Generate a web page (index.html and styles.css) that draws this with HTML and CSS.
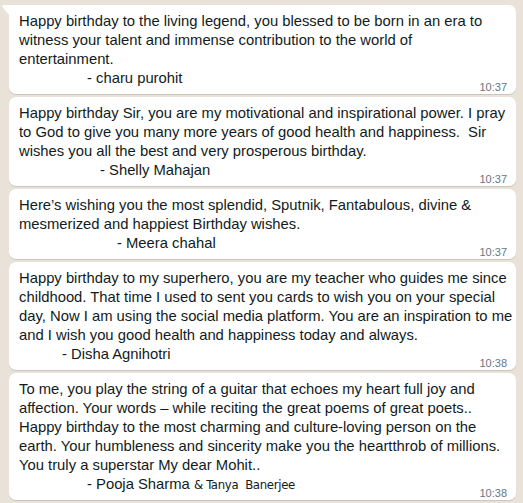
FILE: index.html
```html
<!DOCTYPE html>
<html>
<head>
<meta charset="utf-8">
<link rel="stylesheet" href="styles.css">
</head>
<body>
<div class="chat">
  <div class="bubble first">
    <svg class="tail" width="8" height="13" viewBox="0 0 8 13"><path d="M8 0 H1.5 C0.3 0 -0.3 1.2 0.5 2.1 L8 11 Z" fill="#fff"/></svg>
    <p class="text">Happy birthday to the living legend, you blessed to be born in an era to<br>witness your talent and immense contribution to the world of<br>entertainment.<br><span class="sig i68">- charu purohit</span></p>
    <div class="meta"><span class="time">10:37</span></div>
  </div>
  <div class="bubble">
    <p class="text">Happy birthday Sir, you are my motivational and inspirational power. I pray<br>to God to give you many more years of good health and happiness.&nbsp; Sir<br>wishes you all the best and very prosperous birthday.<br><span class="sig i81">- Shelly Mahajan</span></p>
    <div class="meta"><span class="time">10:37</span></div>
  </div>
  <div class="bubble">
    <p class="text">Here’s wishing you the most splendid, Sputnik, Fantabulous, divine &amp;<br>mesmerized and happiest Birthday wishes.<br><span class="sig i98">- Meera chahal</span></p>
    <div class="meta"><span class="time">10:37</span></div>
  </div>
  <div class="bubble">
    <p class="text">Happy birthday to my superhero, you are my teacher who guides me since<br>childhood. That time I used to sent you cards to wish you on your special<br>day, Now I am using the social media platform. You are an inspiration to me<br>and I wish you good health and happiness today and always.<br><span class="sig i43">- Disha Agnihotri</span></p>
    <div class="meta"><span class="time">10:38</span></div>
  </div>
  <div class="bubble">
    <p class="text">To me, you play the string of a guitar that echoes my heart full joy and<br>affection. Your words – while reciting the great poems of great poets..<br>Happy birthday to the most charming and culture-loving person on the<br>earth. Your humbleness and sincerity make you the heartthrob of millions.<br>You truly a superstar My dear Mohit..<br><span class="sig i68">- Pooja Sharma <span class="hand">&amp; Tanya&nbsp; Banerjee</span></span></p>
    <div class="meta"><span class="time">10:38</span></div>
  </div>
</div>
</body>
</html>
```
FILE: styles.css
```css
html, body {
  margin: 0;
  padding: 0;
}
body {
  width: 523px;
  height: 503px;
  overflow: hidden;
  background: #e9e2d8;
  font-family: "Liberation Sans", Arial, sans-serif;
}
.chat {
  display: flex;
  flex-direction: column;
  gap: 3px;
  padding: 5px 7px 0 9px;
}
.bubble {
  position: relative;
  background: #fff;
  border-radius: 7px;
  box-shadow: 0 1px 0.5px rgba(11, 20, 26, 0.13);
  padding: 7px 9px 0 10px;
}
.bubble.first {
  border-top-left-radius: 0;
}
.tail {
  position: absolute;
  left: -7px;
  top: 0;
}
.text {
  margin: 0;
  font-size: 14.8px;
  line-height: 19px;
  color: #111b21;
  white-space: nowrap;
}
.sig {
  display: inline-block;
}
.i68 { padding-left: 68px; }
.i81 { padding-left: 81px; }
.i98 { padding-left: 98px; }
.i43 { padding-left: 43px; }
.hand {
  font-family: "DejaVu Sans Condensed", "DejaVu Sans", sans-serif;
  font-size: 13px;
  letter-spacing: -0.3px;
}
.meta {
  display: flex;
  justify-content: flex-end;
  margin-top: -8px;
}
.time {
  font-size: 11px;
  line-height: 14px;
  color: #667781;
}
```
